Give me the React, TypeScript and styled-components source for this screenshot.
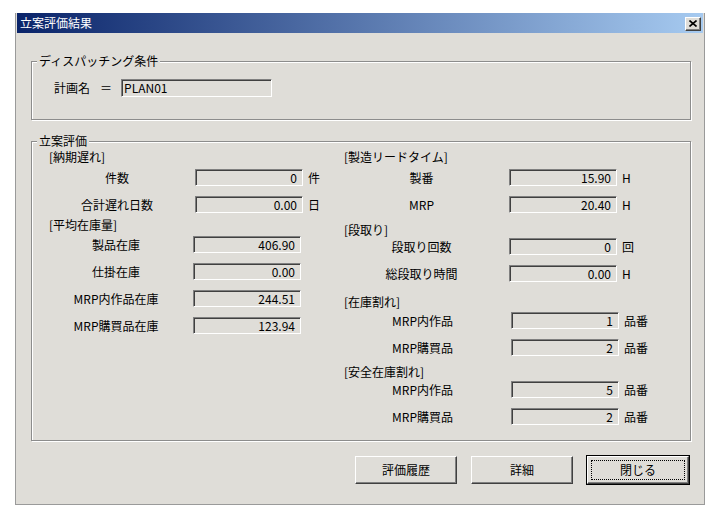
import styled, { createGlobalStyle } from "styled-components"

const GlobalStyle = createGlobalStyle`
  body {
    margin: 0;
    background: #ffffff;
    font-family: "Noto Sans CJK JP", "Liberation Sans", sans-serif;
    font-size: 12px;
    color: #000;
  }
`

const Window = styled.div`
  margin: 13px 0 0 15px;
  width: 690px;
  box-sizing: border-box;
  background: #dfddd8;
  border: 1px solid #9a9a9a;
  border-top: none;
  padding: 0 1px;
`

const TitleBar = styled.div`
  height: 20px;
  display: flex;
  align-items: center;
  justify-content: space-between;
  padding: 0 2px 0 3px;
  background: linear-gradient(to right, #0a246a, #a6caf0);
  color: #fff;
  line-height: 14px;
`

const CloseButton = styled.div`
  width: 16px;
  height: 14px;
  box-sizing: border-box;
  margin-top: 1px;
  display: flex;
  align-items: center;
  justify-content: center;
  background: #dfddd8;
  border-top: 1px solid #fff;
  border-left: 1px solid #fff;
  border-right: 1px solid #404040;
  border-bottom: 1px solid #404040;
  box-shadow: inset -1px -1px 0 #808080;
`

const Content = styled.div`
  display: flex;
  flex-direction: column;
  padding: 28px 12px 20px 14px;
`

const GroupBox = styled.div<{ $top: number; $pad: string }>`
  display: flex;
  flex-direction: column;
  margin-top: ${(p) => p.$top}px;
  padding: ${(p) => p.$pad};
  border: 1px solid #8c8c8c;
  box-shadow: 1px 1px 0 #fff, inset 1px 1px 0 #fff;
`

const Caption = styled.div`
  align-self: flex-start;
  margin: -8px 0 0 5px;
  padding: 0 2px;
  line-height: 14px;
  background: #dfddd8;
`

const PlanRow = styled.div`
  display: flex;
  align-items: center;
  margin: 11px 0 0 22px;
  line-height: 14px;
`

const Eq = styled.span`
  margin: 0 9px 0 10px;
`

const PlanField = styled.div`
  width: 151px;
  height: 18px;
  box-sizing: border-box;
  padding-left: 2px;
  line-height: 15px;
  border-top: 1px solid #808080;
  border-left: 1px solid #808080;
  border-right: 1px solid #fff;
  border-bottom: 1px solid #fff;
  box-shadow: inset 1px 1px 0 #404040;
`

const Columns = styled.div`
  display: flex;
  margin-top: 2px;
  padding-left: 17px;
`

const Column = styled.div<{ $w: number }>`
  display: flex;
  flex-direction: column;
  width: ${(p) => p.$w}px;
`

const Heading = styled.div<{ $top: number; $bottom: number }>`
  line-height: 14px;
  margin: ${(p) => p.$top}px 0 ${(p) => p.$bottom}px;
`

const Row = styled.div`
  display: flex;
  align-items: center;
  height: 17px;
  line-height: 14px;

  & + & {
    margin-top: 10px;
  }
`

const Label = styled.div<{ $w: number }>`
  width: ${(p) => p.$w}px;
  text-align: center;
  white-space: nowrap;
`

const Field = styled.div`
  width: 108px;
  height: 17px;
  box-sizing: border-box;
  margin-left: 10px;
  padding-right: 5px;
  text-align: right;
  line-height: 15px;
  border-top: 1px solid #808080;
  border-left: 1px solid #808080;
  border-right: 1px solid #fff;
  border-bottom: 1px solid #fff;
  box-shadow: inset 1px 1px 0 #404040;
`

const Unit = styled.span`
  margin-left: 5px;
`

const ButtonRow = styled.div`
  display: flex;
  justify-content: flex-end;
  gap: 14px;
  margin-top: 15px;
  padding-right: 2px;
`

const Button = styled.div<{ $default?: boolean }>`
  width: 102px;
  height: 28px;
  box-sizing: border-box;
  display: flex;
  align-items: stretch;
  padding: 3px;
  background: #dfddd8;
  line-height: 14px;
  border-top: 1px solid #fff;
  border-left: 1px solid #fff;
  border-right: 1px solid #404040;
  border-bottom: 1px solid #404040;
  box-shadow: ${(p) =>
    p.$default
      ? "inset -1px -1px 0 #808080, 0 0 0 1px #000"
      : "inset -1px -1px 0 #808080"};
`

const Focus = styled.div<{ $on?: boolean }>`
  flex: 1;
  display: flex;
  align-items: center;
  justify-content: center;
  border: 1px dotted ${(p) => (p.$on ? "#000" : "transparent")};
`

type Item =
  | { kind: "head"; text: string; top: number; bottom: number }
  | { kind: "row"; label: string; value: string; unit?: string; w: number }

const leftItems: Item[] = [
  { kind: "head", text: "[納期遅れ]", top: 0, bottom: 5 },
  { kind: "row", label: "件数", value: "0", unit: "件", w: 136 },
  { kind: "row", label: "合計遅れ日数", value: "0.00", unit: "日", w: 136 },
  { kind: "head", text: "[平均在庫量]", top: 5, bottom: 4 },
  { kind: "row", label: "製品在庫", value: "406.90", w: 134 },
  { kind: "row", label: "仕掛在庫", value: "0.00", w: 134 },
  { kind: "row", label: "MRP内作品在庫", value: "244.51", w: 134 },
  { kind: "row", label: "MRP購買品在庫", value: "123.94", w: 134 },
]

const rightItems: Item[] = [
  { kind: "head", text: "[製造リードタイム]", top: 0, bottom: 5 },
  { kind: "row", label: "製番", value: "15.90", unit: "H", w: 155 },
  { kind: "row", label: "MRP", value: "20.40", unit: "H", w: 155 },
  { kind: "head", text: "[段取り]", top: 10, bottom: 1 },
  { kind: "row", label: "段取り回数", value: "0", unit: "回", w: 155 },
  { kind: "row", label: "総段取り時間", value: "0.00", unit: "H", w: 155 },
  { kind: "head", text: "[在庫割れ]", top: 13, bottom: 3 },
  { kind: "row", label: "MRP内作品", value: "1", unit: "品番", w: 157 },
  { kind: "row", label: "MRP購買品", value: "2", unit: "品番", w: 157 },
  { kind: "head", text: "[安全在庫割れ]", top: 9, bottom: 2 },
  { kind: "row", label: "MRP内作品", value: "5", unit: "品番", w: 157 },
  { kind: "row", label: "MRP購買品", value: "2", unit: "品番", w: 157 },
]

function Items({ items }: { items: Item[] }) {
  return (
    <>
      {items.map((it, i) =>
        it.kind === "head" ? (
          <Heading key={i} $top={it.top} $bottom={it.bottom}>
            {it.text}
          </Heading>
        ) : (
          <Row key={i}>
            <Label $w={it.w}>{it.label}</Label>
            <Field>{it.value}</Field>
            {it.unit && <Unit>{it.unit}</Unit>}
          </Row>
        )
      )}
    </>
  )
}

export default function App() {
  return (
    <>
      <GlobalStyle />
      <Window>
        <TitleBar>
          <span>立案評価結果</span>
          <CloseButton>
            <svg width="8" height="7" viewBox="0 0 8 7">
              <path d="M0.5 0.5 L7.5 6.5 M7.5 0.5 L0.5 6.5" stroke="#000" strokeWidth="1.6" fill="none" />
            </svg>
          </CloseButton>
        </TitleBar>
        <Content>
          <GroupBox $top={0} $pad="0 0 22px 0">
            <Caption>ディスパッチング条件</Caption>
            <PlanRow>
              <span>計画名</span>
              <Eq>＝</Eq>
              <PlanField>PLAN01</PlanField>
            </PlanRow>
          </GroupBox>
          <GroupBox $top={21} $pad="0 0 15px 0">
            <Caption>立案評価</Caption>
            <Columns>
              <Column $w={295}>
                <Items items={leftItems} />
              </Column>
              <Column $w={320}>
                <Items items={rightItems} />
              </Column>
            </Columns>
          </GroupBox>
          <ButtonRow>
            <Button>
              <Focus>評価履歴</Focus>
            </Button>
            <Button>
              <Focus>詳細</Focus>
            </Button>
            <Button $default>
              <Focus $on>閉じる</Focus>
            </Button>
          </ButtonRow>
        </Content>
      </Window>
    </>
  )
}
